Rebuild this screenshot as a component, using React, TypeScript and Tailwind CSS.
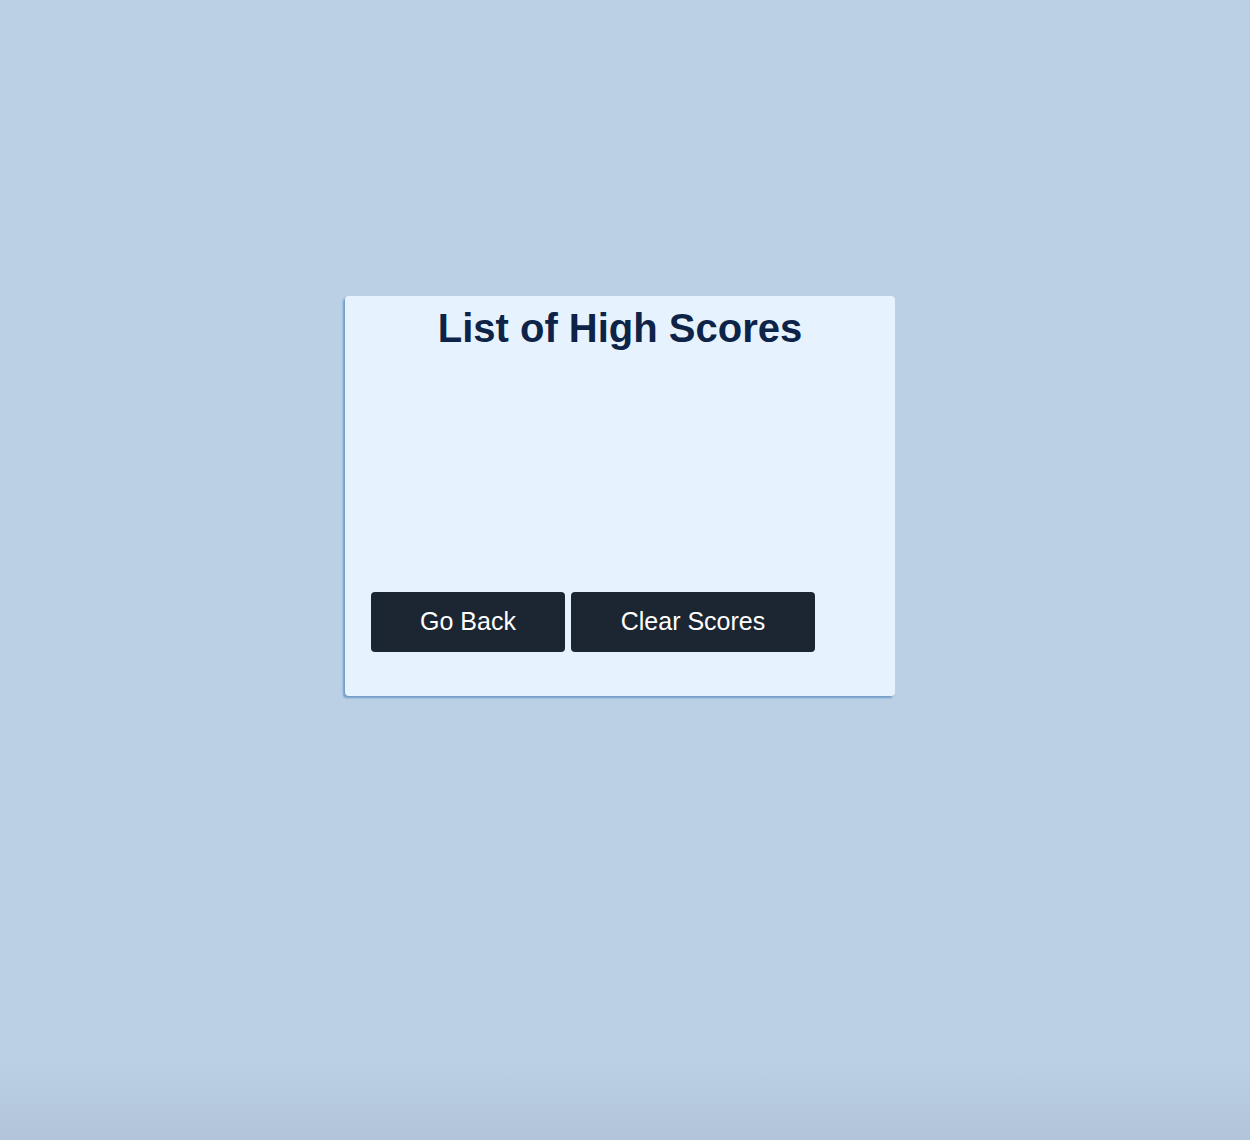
export default function App() {
  return (
    <div className="min-h-[1140px] w-full bg-[linear-gradient(to_bottom,#bbd0e5_0%,#bbd0e5_93%,#b1c4da_100%)] font-['Liberation_Sans',Arial,sans-serif]">
      <div className="flex justify-center pr-[10px] pt-[296px]">
        <div className="w-[550px] h-[400px] rounded-[4px] bg-[#e6f3fe] shadow-[-2px_2px_2px_rgba(90,140,190,0.75)] px-[26px]">
          <h1 className="pt-[8px] text-center text-[40px] leading-[48px] font-bold text-[#0e2348]">
            List of High Scores
          </h1>
          <div className="h-[240px]"></div>
          <div className="flex gap-[6px]">
            <button className="w-[194px] h-[60px] rounded-[4px] bg-[#1b2632] text-white text-[25px]">
              Go Back
            </button>
            <button className="w-[244px] h-[60px] rounded-[4px] bg-[#1b2632] text-white text-[25px]">
              Clear Scores
            </button>
          </div>
        </div>
      </div>
    </div>
  );
}
